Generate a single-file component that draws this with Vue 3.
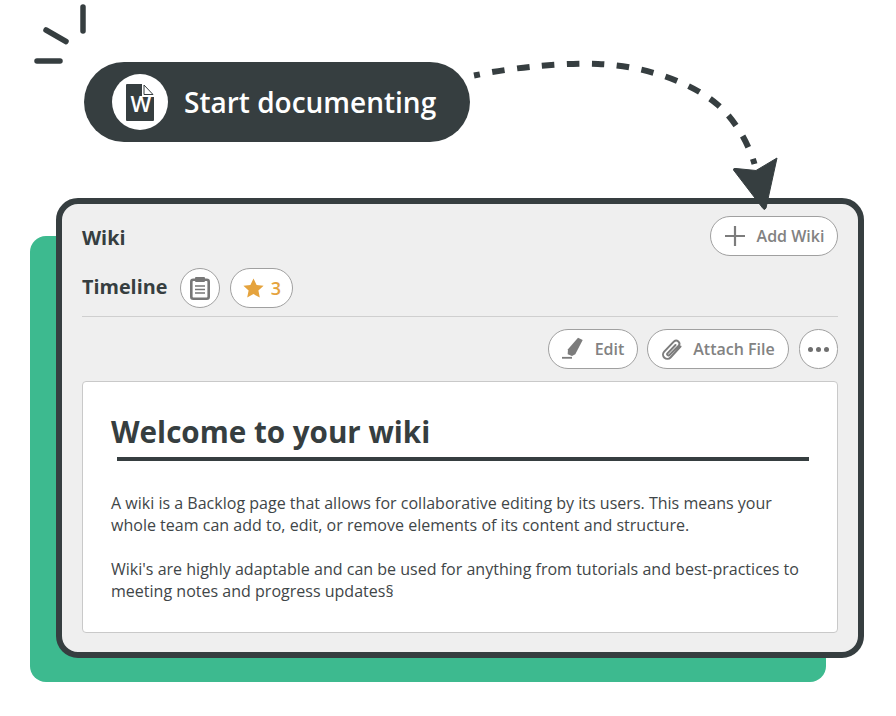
<script setup>
const paragraphs = [
  ['A wiki is a Backlog page that allows for collaborative editing by its users. This means your', 'whole team can add to, edit, or remove elements of its content and structure.'],
  ["Wiki's are highly adaptable and can be used for anything from tutorials and best-practices to", 'meeting notes and progress updates§'],
]
</script>

<template>
  <div class="stage">
    <div class="backdrop"></div>

    <div class="pill">
      <span class="pill-icon">
        <svg width="28" height="37" viewBox="0 0 28 37">
          <path d="M1 0H16V13H28V36a1 1 0 0 1-1 1H1a1 1 0 0 1-1-1V1a1 1 0 0 1 1-1Z" fill="#363e40" />
          <path d="M18 1L27 10.500H18Z" fill="#fff" stroke="#363e40" stroke-width="1" />
          <text x="15" y="27.700" class="doc-letter">W</text>
        </svg>
      </span>
      <span class="pill-text">Start documenting</span>
    </div>

    <section class="card">
      <div class="row row-wiki">
        <h2 class="label label-wiki">Wiki</h2>
        <button class="btn btn-add">
          <svg width="22" height="22" viewBox="0 0 22 22"><path d="M11 1V21M1 11H21" stroke="#7c7c7c" stroke-width="2.200" fill="none" /></svg>
          <span>Add Wiki</span>
        </button>
      </div>

      <div class="row row-timeline">
        <h2 class="label label-timeline">Timeline</h2>
        <button class="btn btn-round">
          <svg width="20" height="23" viewBox="0 0 20 23" fill="none" stroke="#777">
            <rect x="1.300" y="2.800" width="17.400" height="18.900" rx="2" stroke-width="2.600" />
            <rect x="5" y="0" width="10" height="5" rx="1" fill="#777" stroke="none" />
            <path d="M5 9H15M5 12.500H15M5 16H15" stroke-width="1.400" />
          </svg>
        </button>
        <button class="btn btn-star">
          <svg width="21" height="20" viewBox="0 0 21 20"><path d="M10.500 0.500L13.600 7 20.600 7.800 15.400 12.600 16.800 19.600 10.500 16.100 4.200 19.600 5.600 12.600 0.400 7.800 7.400 7Z" fill="#e5a33d" /></svg>
          <span>3</span>
        </button>
      </div>

      <div class="actions">
        <button class="btn btn-edit">
          <svg class="pen" width="21" height="22" viewBox="0 0 21 22" fill="#7c7c7c">
            <path d="M16 0.700L20.700 3 13.300 17.300 10 19 5.700 17.300 6 12.300Z" />
            <path d="M0 20.800H10" stroke="#7c7c7c" stroke-width="1.800" fill="none" />
          </svg>
          <span>Edit</span>
        </button>
        <button class="btn btn-attach">
          <svg width="21" height="21" viewBox="0 0 21 21" fill="none" stroke="#7c7c7c" stroke-width="2" stroke-linecap="round">
            <path d="M19.500 7.500L9.500 18.500a4.300 4.300 0 0 1-6.300-5.900L13 2.400a3.200 3.200 0 0 1 4.700 4.300L8.200 16.200a1.300 1.300 0 0 1-1.900-1.700L14.500 6" />
          </svg>
          <span>Attach File</span>
        </button>
        <button class="btn btn-more">
          <i></i><i></i><i></i>
        </button>
      </div>

      <article class="wiki">
        <h1 class="wiki-title">Welcome to your wiki</h1>
        <p v-for="(lines, i) in paragraphs" :key="i" class="wiki-para">
          <span v-for="line in lines" :key="line" class="line">{{ line }}</span>
        </p>
      </article>
    </section>

    <svg class="overlay" width="896" height="716" viewBox="0 0 896 716" fill="none">
      <g stroke="#363e40" stroke-linecap="round" stroke-width="5.500">
        <path d="M83 7V31" />
        <path d="M46 30L66 41.500" />
        <path d="M37 61H60" />
      </g>
      <path d="M474 75.500C520 66 570 62.500 598 64C650 66 695 85 718 105C735 120 748 142 754.500 164" stroke="#363e40" stroke-width="6" stroke-dasharray="12.500 12.500" stroke-dashoffset="6.500" />
      <path d="M777 158L766 208Q765 210.500 763 208.500L733.500 170Q733 168 736 168.500L756 170.500Z" fill="#363e40" stroke="#363e40" stroke-width="1" stroke-linejoin="round" />
    </svg>
  </div>
</template>

<style scoped>
.stage {
  position: relative;
  width: 896px;
  height: 716px;
  overflow: hidden;
  background: #fff;
  padding: 62px 0 0 56px;
  box-sizing: border-box;
  font-family: "Open Sans", "Noto Sans", sans-serif;
  color: #363e40;
}
.backdrop {
  position: absolute;
  left: 30px;
  top: 236px;
  width: 796px;
  height: 446px;
  border-radius: 16px;
  background: #3dba8f;
}
.overlay {
  position: absolute;
  left: 0;
  top: 0;
  pointer-events: none;
}
.pill {
  display: flex;
  align-items: center;
  gap: 16px;
  width: 386px;
  height: 80px;
  margin-left: 28px;
  padding-left: 28px;
  box-sizing: border-box;
  border-radius: 40px;
  background: #363e40;
  color: #fff;
}
.pill-icon {
  display: flex;
  align-items: center;
  justify-content: center;
  width: 56px;
  height: 56px;
  border-radius: 50%;
  background: #fff;
}
.doc-letter {
  font-family: "Open Sans", sans-serif;
  font-size: 22px;
  font-weight: 600;
  fill: #fff;
  text-anchor: middle;
}
.pill-text {
  font-size: 28px;
  font-weight: 600;
  line-height: 38px;
}
.card {
  position: relative;
  box-sizing: border-box;
  width: 808px;
  height: 460px;
  margin-top: 56px;
  padding: 12px 20px 0;
  border: 6px solid #363e40;
  border-radius: 22px;
  background: #efefef;
}
.row {
  display: flex;
  align-items: center;
}
.row-wiki {
  justify-content: space-between;
  height: 40px;
}
.row-timeline {
  gap: 10px;
  height: 40px;
  margin-top: 12px;
  padding-bottom: 8px;
  box-sizing: content-box;
  border-bottom: 1px solid #cfcfcf;
}
.label {
  margin: 0;
  font-size: 19.800px;
  font-weight: 700;
  line-height: 28px;
}
.label-wiki {
  margin-top: 3px;
}
.label-timeline {
  margin-top: -2px;
  margin-right: 3px;
}
.btn {
  display: flex;
  align-items: center;
  justify-content: center;
  box-sizing: border-box;
  height: 40px;
  padding: 0;
  border: 1px solid #a0a0a0;
  border-radius: 20px;
  background: #fff;
  font-family: inherit;
  font-size: 16px;
  font-weight: 600;
  color: #828282;
}
.btn-add {
  width: 128px;
  gap: 11px;
}
.btn-round {
  width: 40px;
}
.btn-star {
  width: 63px;
  gap: 7px;
  font-size: 18px;
  font-weight: 600;
  color: #e5a33d;
}
.actions {
  display: flex;
  justify-content: flex-end;
  gap: 10px;
  margin-top: 12px;
}
.btn-edit {
  width: 90px;
  gap: 12px;
  margin-right: -1px;
}
.pen {
  margin-top: -2px;
}
.btn-attach {
  width: 142px;
  gap: 11px;
}
.btn-more {
  width: 39px;
  gap: 3px;
}
.btn-more i {
  width: 5px;
  height: 5px;
  border-radius: 50%;
  background: #6f6f6f;
}
.wiki {
  box-sizing: border-box;
  height: 252px;
  margin-top: 12px;
  padding: 29px 28px 0;
  border: 1px solid #c9c9c9;
  border-radius: 4px;
  background: #fff;
}
.wiki-title {
  margin: 0 0 31px;
  font-size: 29.600px;
  font-weight: 700;
  line-height: 42px;
}
.wiki-title::after {
  content: "";
  display: block;
  width: 692px;
  height: 4px;
  margin: 4px 0 0 6px;
  background: #363e40;
}
.wiki-para {
  margin: 0 0 22px;
  font-size: 16.050px;
  line-height: 22px;
  color: #3f4648;
}
.line {
  display: block;
  white-space: nowrap;
}
</style>
